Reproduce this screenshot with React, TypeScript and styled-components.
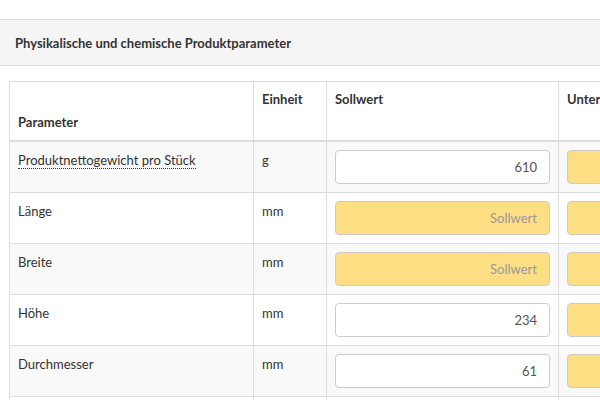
import React from "react";
import styled, { createGlobalStyle } from "styled-components";

const GlobalStyle = createGlobalStyle`
  html, body {
    margin: 0;
    padding: 0;
    background: #fff;
    overflow: hidden;
  }
  body {
    font-family: Lato, "Liberation Sans", sans-serif;
    font-size: 13px;
    color: #333;
  }
`;

const Page = styled.div`
  width: 1000px;
  padding-top: 19px;
`;

const PanelHeading = styled.div`
  height: 47px;
  box-sizing: border-box;
  padding: 0 15px;
  display: flex;
  align-items: center;
  background: #f5f5f5;
  border-top: 1px solid #ddd;
  border-bottom: 1px solid #ddd;
  font-weight: 700;
  font-size: 13px;
`;

const PanelBody = styled.div`
  padding: 15px 0 0 9px;
`;

const Table = styled.table`
  border-collapse: collapse;
  table-layout: fixed;
  width: 900px;
`;

const HeadCell = styled.th<{ $width: number; $bottom?: boolean }>`
  width: ${({ $width }) => $width}px;
  height: 59px;
  box-sizing: border-box;
  padding: 7px 8px 8px;
  text-align: left;
  font-weight: 700;
  line-height: 20px;
  vertical-align: ${({ $bottom }) => ($bottom ? "bottom" : "top")};
  border: 1px solid #ddd;
  border-bottom: 2px solid #ddd;
`;

const Row = styled.tr<{ $striped: boolean }>`
  background: ${({ $striped }) => ($striped ? "#f9f9f9" : "#fff")};
`;

const Cell = styled.td`
  height: 51px;
  box-sizing: border-box;
  padding: 8px;
  line-height: 20px;
  vertical-align: top;
  border: 1px solid #ddd;
`;

const Hint = styled.span`
  border-bottom: 1px dotted #333;
`;

const ValueInput = styled.input<{ $empty: boolean }>`
  display: block;
  width: 100%;
  height: 34px;
  box-sizing: border-box;
  padding: 6px 12px;
  border: 1px solid #ccc;
  border-radius: 4px;
  background: ${({ $empty }) => ($empty ? "#fede82" : "#fff")};
  font-family: inherit;
  font-size: 13px;
  color: #555;
  text-align: right;
  outline: none;

  &::placeholder {
    color: #999;
  }
`;

interface ParamRow {
  name: string;
  unit: string;
  value?: string;
  hint?: boolean;
}

const rows: ParamRow[] = [
  { name: "Produktnettogewicht pro Stück", unit: "g", value: "610", hint: true },
  { name: "Länge", unit: "mm" },
  { name: "Breite", unit: "mm" },
  { name: "Höhe", unit: "mm", value: "234" },
  { name: "Durchmesser", unit: "mm", value: "61" },
  { name: "Gewicht", unit: "g" },
];

const App = () => (
  <>
    <GlobalStyle />
    <Page>
      <PanelHeading>Physikalische und chemische Produktparameter</PanelHeading>
      <PanelBody>
        <Table>
          <thead>
            <tr>
              <HeadCell $width={244} $bottom>
                Parameter
              </HeadCell>
              <HeadCell $width={73}>Einheit</HeadCell>
              <HeadCell $width={232}>Sollwert</HeadCell>
              <HeadCell $width={232}>Untergrenze</HeadCell>
              <HeadCell $width={119}>Obergrenze</HeadCell>
            </tr>
          </thead>
          <tbody>
            {rows.map((row, i) => (
              <Row key={row.name} $striped={i % 2 === 0}>
                <Cell>{row.hint ? <Hint>{row.name}</Hint> : row.name}</Cell>
                <Cell>{row.unit}</Cell>
                <Cell>
                  <ValueInput
                    $empty={!row.value}
                    defaultValue={row.value}
                    placeholder="Sollwert"
                  />
                </Cell>
                <Cell>
                  <ValueInput $empty defaultValue="" placeholder="Untergrenze" />
                </Cell>
                <Cell>
                  <ValueInput $empty defaultValue="" placeholder="Obergrenze" />
                </Cell>
              </Row>
            ))}
          </tbody>
        </Table>
      </PanelBody>
    </Page>
  </>
);

export default App;
